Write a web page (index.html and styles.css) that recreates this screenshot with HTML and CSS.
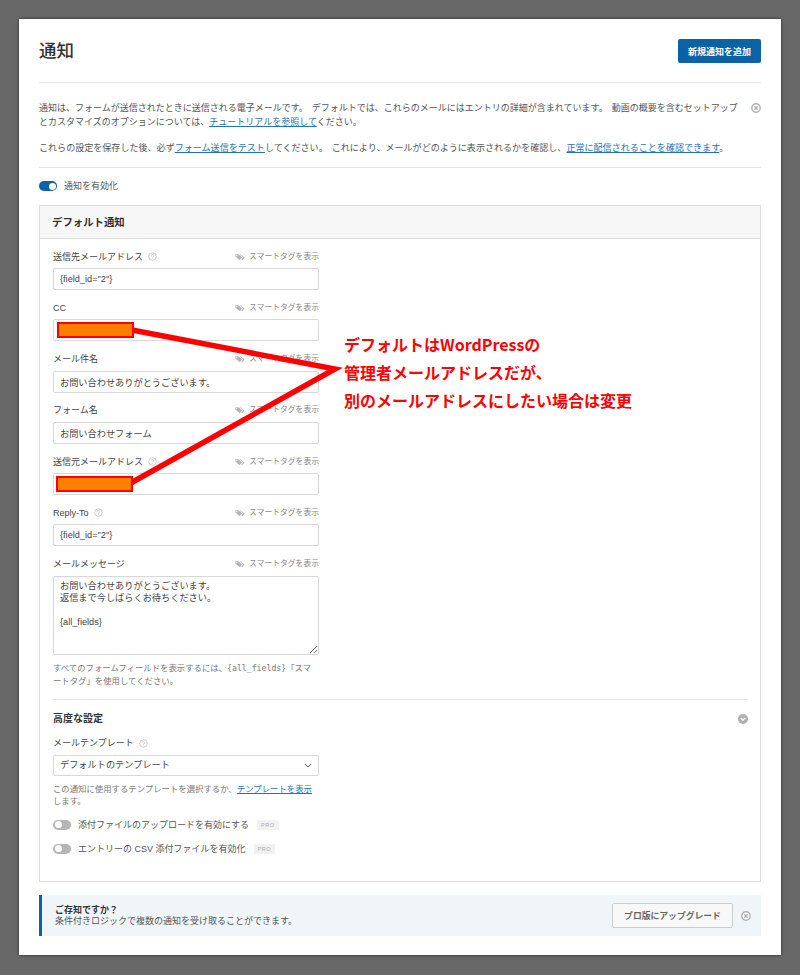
FILE: index.html
```html
<!DOCTYPE html>
<html lang="ja">
<head>
  <meta charset="UTF-8" />
  <title>通知</title>
  <link rel="stylesheet" href="styles.css">
</head>
<body>
  <svg class="icon-defs" width="0" height="0">
    <symbol id="tag" viewBox="0 0 14 10">
      <path d="M0.5 1.2 L4.6 1.2 L10 5.4 L6.6 9.4 L0.5 4.4 Z" fill="#b5b5b5"/>
      <path d="M6.2 1.2 L7.6 1.2 L13.5 5.6 L10 9.6 L8.8 8.8 L11.4 5.4 Z" fill="#b5b5b5"/>
      <circle cx="2.4" cy="3" r="0.8" fill="#fff"/>
    </symbol>
    <symbol id="help" viewBox="0 0 10 10">
      <circle cx="5" cy="5" r="4.2" fill="none" stroke="#bbb" stroke-width="0.8"/>
      <path d="M3.6 4 C3.6 2.4 6.4 2.4 6.4 4 C6.4 5 5 5 5 6.1" fill="none" stroke="#bbb" stroke-width="0.8"/>
      <circle cx="5" cy="7.4" r="0.5" fill="#bbb"/>
    </symbol>
    <symbol id="close" viewBox="0 0 10 10">
      <circle cx="5" cy="5" r="4.2" fill="#fff" stroke="#b0b0b0" stroke-width="1.4"/>
      <path d="M3.3 3.3 L6.7 6.7 M6.7 3.3 L3.3 6.7" stroke="#b0b0b0" stroke-width="1.4"/>
    </symbol>
  </svg>

  <div class="sheet">
    <header class="top-bar">
      <h1>通知</h1>
      <button class="btn-primary">新規通知を追加</button>
    </header>

    <div class="intro">
      <div class="intro-text">
        <p>通知は、フォームが送信されたときに送信される電子メールです。 デフォルトでは、これらのメールにはエントリの詳細が含まれています。 動画の概要を含むセットアップとカスタマイズのオプションについては、<a href="#">チュートリアルを参照して</a>ください。</p>
        <p>これらの設定を保存した後、必ず<a href="#">フォーム送信をテスト</a>してください。 これにより、メールがどのように表示されるかを確認し、<a href="#">正常に配信されることを確認できます</a>。</p>
      </div>
      <svg class="icon-close"><use href="#close"/></svg>
    </div>

    <div class="enable-row">
      <span class="toggle on"></span>
      <span>通知を有効化</span>
    </div>

    <section class="panel">
      <h2 class="panel-title">デフォルト通知</h2>
      <div class="panel-body">
        <div class="field">
          <div class="field-head">
            <label>送信先メールアドレス <svg class="icon-help"><use href="#help"/></svg></label>
            <span class="smart"><svg class="icon-tag"><use href="#tag"/></svg>スマートタグを表示</span>
          </div>
          <input type="text" value='{field_id="2"}'>
        </div>
        <div class="field">
          <div class="field-head">
            <label>CC</label>
            <span class="smart"><svg class="icon-tag"><use href="#tag"/></svg>スマートタグを表示</span>
          </div>
          <input type="text">
        </div>
        <div class="field">
          <div class="field-head">
            <label>メール件名</label>
            <span class="smart"><svg class="icon-tag"><use href="#tag"/></svg>スマートタグを表示</span>
          </div>
          <input type="text" value="お問い合わせありがとうございます。">
        </div>
        <div class="field">
          <div class="field-head">
            <label>フォーム名</label>
            <span class="smart"><svg class="icon-tag"><use href="#tag"/></svg>スマートタグを表示</span>
          </div>
          <input type="text" value="お問い合わせフォーム">
        </div>
        <div class="field">
          <div class="field-head">
            <label>送信元メールアドレス <svg class="icon-help"><use href="#help"/></svg></label>
            <span class="smart"><svg class="icon-tag"><use href="#tag"/></svg>スマートタグを表示</span>
          </div>
          <input type="text">
        </div>
        <div class="field">
          <div class="field-head">
            <label>Reply-To <svg class="icon-help"><use href="#help"/></svg></label>
            <span class="smart"><svg class="icon-tag"><use href="#tag"/></svg>スマートタグを表示</span>
          </div>
          <input type="text" value='{field_id="2"}'>
        </div>
        <div class="field message">
          <div class="field-head">
            <label>メールメッセージ</label>
            <span class="smart"><svg class="icon-tag"><use href="#tag"/></svg>スマートタグを表示</span>
          </div>
          <textarea>お問い合わせありがとうございます。
返信まで今しばらくお待ちください。

{all_fields}</textarea>
          <p class="hint">すべてのフォームフィールドを表示するには、<code>{all_fields}</code>「スマートタグ」を使用してください。</p>
        </div>

        <div class="advanced">
          <div class="advanced-head">
            <h3>高度な設定</h3>
            <svg class="icon-chevron" viewBox="0 0 10 10">
              <circle cx="5" cy="5" r="5" fill="#b0b0b0"/>
              <path d="M2.8 4 L5 6.2 L7.2 4" fill="none" stroke="#fff" stroke-width="1.4"/>
            </svg>
          </div>
          <div class="field template">
            <div class="field-head">
              <label>メールテンプレート <svg class="icon-help"><use href="#help"/></svg></label>
            </div>
            <div class="select">
              <span>デフォルトのテンプレート</span>
              <svg class="select-arrow" viewBox="0 0 8 5"><path d="M1 1 L4 4 L7 1" fill="none" stroke="#555" stroke-width="1"/></svg>
            </div>
            <p class="hint">この通知に使用するテンプレートを選択するか、<a href="#">テンプレートを表示</a><br>します。</p>
          </div>
          <div class="switch-row">
            <span class="toggle"></span>
            <span>添付ファイルのアップロードを有効にする</span>
            <span class="pro">PRO</span>
          </div>
          <div class="switch-row">
            <span class="toggle"></span>
            <span>エントリーの CSV 添付ファイルを有効化</span>
            <span class="pro">PRO</span>
          </div>
        </div>
      </div>
    </section>

    <div class="tip">
      <div class="tip-text">
        <strong>ご存知ですか？</strong>
        <span>条件付きロジックで複数の通知を受け取ることができます。</span>
      </div>
      <button class="btn-upgrade">プロ版にアップグレード</button>
      <svg class="icon-close"><use href="#close"/></svg>
    </div>

    <!-- annotation drawn over the form -->
    <svg class="marks" viewBox="0 0 762 936">
      <path d="M113 311 L316 350 L110 465" fill="none" stroke="#f00" stroke-width="5.5"/>
      <rect x="39" y="304" width="75" height="14" fill="#ff8000" stroke="#f00" stroke-width="2"/>
      <rect x="38" y="458" width="75" height="14" fill="#ff8000" stroke="#f00" stroke-width="2"/>
    </svg>
    <div class="callout">デフォルトはWordPressの<br>管理者メールアドレスだが、<br>別のメールアドレスにしたい場合は変更</div>
  </div>
</body>
</html>
```
FILE: styles.css
```css
* {
  margin: 0;
  padding: 0;
  box-sizing: border-box;
}

html, body {
  height: 975px;
  overflow: hidden;
}

body {
  font-family: "Liberation Sans", "Noto Sans CJK JP", sans-serif;
  font-size: 9px;
  line-height: 14px;
  color: #555;
  background: #686868;
  padding: 19px;
}

a {
  color: #1f74b4;
  text-decoration: underline;
}

.icon-defs {
  position: absolute;
}

.sheet {
  position: relative;
  width: 762px;
  height: 936px;
  padding: 20px;
  background: #fff;
  box-shadow: 0 0 3px rgba(0, 0, 0, 0.6);
}

.top-bar {
  display: flex;
  justify-content: space-between;
  align-items: center;
  padding-bottom: 19px;
  border-bottom: 1px solid #e6e6e6;
}

.top-bar h1 {
  font-size: 17.5px;
  font-weight: 500;
  color: #333;
  line-height: 24px;
}

.btn-primary {
  width: 83px;
  height: 24px;
  font: 700 9px "Liberation Sans", "Noto Sans CJK JP", sans-serif;
  color: #fff;
  background: #0a62a8;
  border: none;
  border-radius: 2px;
}

.intro {
  display: flex;
  justify-content: space-between;
  padding: 18px 0 12px;
  border-bottom: 1px solid #e6e6e6;
}

.intro-text {
  width: 700px;
  word-spacing: 1.5px;
}

.intro-text p + p {
  margin-top: 12px;
  font-size: 9.05px;
}

.icon-close {
  width: 10px;
  height: 10px;
  flex: none;
}

.intro .icon-close {
  margin: 2px 0 0;
}

.enable-row {
  display: flex;
  align-items: center;
  gap: 7px;
  height: 14px;
  margin: 11px 0 12px;
}

.toggle {
  position: relative;
  display: block;
  flex: none;
  width: 18px;
  height: 10px;
  border-radius: 5px;
  background: #b5b5b5;
}

.toggle::after {
  content: "";
  position: absolute;
  top: 1.5px;
  left: 1.5px;
  width: 7px;
  height: 7px;
  border-radius: 50%;
  background: #fff;
}

.toggle.on {
  background: #0a62a8;
}

.toggle.on::after {
  left: 9.5px;
}

.panel {
  height: 677px;
  border: 1px solid #ddd;
}

.panel-title {
  height: 33px;
  padding: 0 12px;
  font-size: 10.4px;
  font-weight: 700;
  line-height: 34px;
  color: #333;
  background: #f7f7f7;
  border-bottom: 1px solid #ddd;
}

.panel-body {
  padding: 11px 12px 0 13px;
}

.field {
  width: 266px;
  margin-bottom: 11.3px;
}

.field-head {
  display: flex;
  justify-content: space-between;
  align-items: center;
  height: 12px;
  padding-top: 1px;
  margin-bottom: 6px;
}

.field-head label {
  display: flex;
  align-items: center;
  gap: 5px;
  color: #444;
}

.icon-help {
  width: 9px;
  height: 9px;
}

.smart {
  display: flex;
  align-items: center;
  gap: 4px;
  font-size: 7.8px;
  color: #888;
}

.icon-tag {
  width: 10px;
  height: 8px;
}

input,
textarea,
.select {
  display: block;
  width: 100%;
  font: 9.2px/12px "Liberation Sans", "Noto Sans CJK JP", sans-serif;
  color: #444;
  background: #fff;
  border: 1px solid #d8d8d8;
  border-radius: 2px;
  outline: none;
}

input {
  height: 22px;
  padding: 0 6px;
}

textarea {
  height: 79px;
  padding: 3px 6px;
}

.hint {
  margin-top: 7px;
  font-size: 8.4px;
  line-height: 13.5px;
  color: #777;
}

.hint code {
  font-family: "DejaVu Sans Mono", monospace;
  font-size: 8.2px;
}

.message {
  margin-bottom: 10px;
}

.advanced {
  padding-top: 13px;
  border-top: 1px solid #e6e6e6;
  width: 695px;
}

.advanced-head {
  display: flex;
  justify-content: space-between;
  align-items: center;
  height: 13px;
  margin-bottom: 11px;
}

.advanced-head h3 {
  font-size: 10px;
  font-weight: 700;
  color: #333;
}

.icon-chevron {
  width: 10px;
  height: 10px;
}

.template {
  margin-bottom: 11px;
}

.select {
  display: flex;
  justify-content: space-between;
  align-items: center;
  height: 21px;
  padding: 0 6px;
}

.select-arrow {
  width: 8px;
  height: 5px;
}

.template .hint {
  line-height: 12px;
}

.switch-row {
  display: flex;
  align-items: center;
  gap: 7px;
  height: 14px;
  margin-bottom: 10px;
}

.pro {
  margin-left: 1px;
  padding: 0 4px;
  font-size: 5.5px;
  line-height: 10px;
  letter-spacing: 0.5px;
  color: #aaa;
  background: #f2f2f2;
}

.tip {
  display: flex;
  align-items: center;
  height: 41px;
  margin-top: 13px;
  padding: 0 10px 0 13px;
  background: #f0f5fa;
  border-left: 3px solid #0a62a8;
}

.tip-text {
  flex: 1;
  display: flex;
  flex-direction: column;
  padding-top: 1px;
  line-height: 11px;
}

.tip-text strong {
  color: #333;
}

.btn-upgrade {
  width: 121px;
  height: 25px;
  margin-right: 8px;
  font: 700 8.8px "Liberation Sans", "Noto Sans CJK JP", sans-serif;
  color: #666;
  background: #f8f8f8;
  border: 1px solid #ccc;
  border-radius: 2px;
}

.marks {
  position: absolute;
  top: 0;
  left: 0;
  width: 762px;
  height: 936px;
  pointer-events: none;
}

.callout {
  position: absolute;
  top: 311px;
  left: 325px;
  font-family: "Noto Sans CJK JP", sans-serif;
  font-size: 16px;
  font-weight: 700;
  line-height: 28px;
  color: #f00;
  white-space: nowrap;
}
```
